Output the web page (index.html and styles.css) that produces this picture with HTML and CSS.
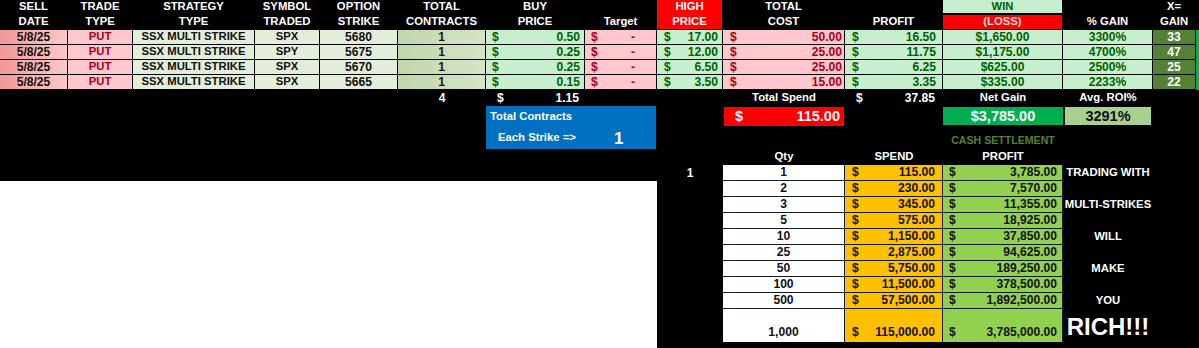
FILE: index.html
```html
<!DOCTYPE html>
<html>
<head>
<meta charset="utf-8">
<title>SSX Multi Strike</title>
<link rel="stylesheet" href="styles.css">
</head>
<body>
<div class="sheet">
  <div class="top">
    <div class="hc"><span>SELL</span><span>DATE</span></div>
    <div class="hc"><span>TRADE</span><span>TYPE</span></div>
    <div class="hc"><span>STRATEGY</span><span>TYPE</span></div>
    <div class="hc"><span>SYMBOL</span><span>TRADED</span></div>
    <div class="hc"><span>OPTION</span><span>STRIKE</span></div>
    <div class="hc"><span>TOTAL</span><span>CONTRACTS</span></div>
    <div class="hc"><span>BUY</span><span>PRICE</span></div>
    <div class="hc"><span></span><span>Target</span></div>
    <div class="hc hc-red"><span>HIGH</span><span>PRICE</span></div>
    <div class="hc"><span>TOTAL</span><span>COST</span></div>
    <div class="hc"><span></span><span>PROFIT</span></div>
    <div class="hc hc-winloss"><span class="win">WIN</span><span class="loss">(LOSS)</span></div>
    <div class="hc"><span></span><span>% GAIN</span></div>
    <div class="hc"><span>X=</span><span>GAIN</span></div>
    <div class="hc"></div>

    <div class="c c-date num">5/8/25</div>
    <div class="c c-put">PUT</div>
    <div class="c c-lt">SSX MULTI STRIKE</div>
    <div class="c c-lt">SPX</div>
    <div class="c c-lt num">5680</div>
    <div class="c c-qty num">1</div>
    <div class="c c-good money m-buy"><span>$</span><span>0.50</span></div>
    <div class="c c-bad money m-target"><span>$</span><span>-</span></div>
    <div class="c c-good money m-high"><span>$</span><span>17.00</span></div>
    <div class="c c-bad money m-cost"><span>$</span><span>50.00</span></div>
    <div class="c c-good money m-profit"><span>$</span><span>16.50</span></div>
    <div class="c c-good num">$1,650.00</div>
    <div class="c c-good num">3300%</div>
    <div class="c c-x num">33</div>
    <div class="c-edge"></div>

    <div class="c c-date num">5/8/25</div>
    <div class="c c-put">PUT</div>
    <div class="c c-lt">SSX MULTI STRIKE</div>
    <div class="c c-lt">SPY</div>
    <div class="c c-lt num">5675</div>
    <div class="c c-qty num">1</div>
    <div class="c c-good money m-buy"><span>$</span><span>0.25</span></div>
    <div class="c c-bad money m-target"><span>$</span><span>-</span></div>
    <div class="c c-good money m-high"><span>$</span><span>12.00</span></div>
    <div class="c c-bad money m-cost"><span>$</span><span>25.00</span></div>
    <div class="c c-good money m-profit"><span>$</span><span>11.75</span></div>
    <div class="c c-good num">$1,175.00</div>
    <div class="c c-good num">4700%</div>
    <div class="c c-x num">47</div>
    <div class="c-edge"></div>

    <div class="c c-date num">5/8/25</div>
    <div class="c c-put">PUT</div>
    <div class="c c-lt">SSX MULTI STRIKE</div>
    <div class="c c-lt">SPX</div>
    <div class="c c-lt num">5670</div>
    <div class="c c-qty num">1</div>
    <div class="c c-good money m-buy"><span>$</span><span>0.25</span></div>
    <div class="c c-bad money m-target"><span>$</span><span>-</span></div>
    <div class="c c-good money m-high"><span>$</span><span>6.50</span></div>
    <div class="c c-bad money m-cost"><span>$</span><span>25.00</span></div>
    <div class="c c-good money m-profit"><span>$</span><span>6.25</span></div>
    <div class="c c-good num">$625.00</div>
    <div class="c c-good num">2500%</div>
    <div class="c c-x num">25</div>
    <div class="c-edge"></div>

    <div class="c c-date num">5/8/25</div>
    <div class="c c-put">PUT</div>
    <div class="c c-lt">SSX MULTI STRIKE</div>
    <div class="c c-lt">SPX</div>
    <div class="c c-lt num">5665</div>
    <div class="c c-qty num">1</div>
    <div class="c c-good money m-buy"><span>$</span><span>0.15</span></div>
    <div class="c c-bad money m-target"><span>$</span><span>-</span></div>
    <div class="c c-good money m-high"><span>$</span><span>3.50</span></div>
    <div class="c c-bad money m-cost"><span>$</span><span>15.00</span></div>
    <div class="c c-good money m-profit"><span>$</span><span>3.35</span></div>
    <div class="c c-good num">$335.00</div>
    <div class="c c-good num">2233%</div>
    <div class="c c-x num">22</div>
    <div class="c-edge"></div>
  </div>

  <div class="bottom">
    <div class="tot tot-contracts num">4</div>
    <div class="tot tot-buy money"><span>$</span><span>1.15</span></div>
    <div class="tot tot-spend-label">Total Spend</div>
    <div class="tot tot-profit money"><span>$</span><span>37.85</span></div>
    <div class="tot tot-net-label">Net Gain</div>
    <div class="tot tot-roi-label">Avg. ROI%</div>

    <div class="blue-box">
      <div class="blue-l1">Total Contracts</div>
      <div class="blue-l2"><span>Each Strike =&gt;</span><span class="blue-num">1</span></div>
    </div>
    <div class="spend-box"><span>$</span><span>115.00</span></div>
    <div class="net-box">$3,785.00</div>
    <div class="roi-box">3291%</div>

    <div class="cash-title">CASH SETTLEMENT</div>
    <div class="ch ch-qty">Qty</div>
    <div class="ch ch-spend">SPEND</div>
    <div class="ch ch-profit">PROFIT</div>
    <div class="multiplier num">1</div>

    <div class="cash">
      <div class="q num">1</div><div class="s money"><span>$</span><span>115.00</span></div><div class="p money"><span>$</span><span>3,785.00</span></div><div class="lbl">TRADING WITH</div>
      <div class="q num">2</div><div class="s money"><span>$</span><span>230.00</span></div><div class="p money"><span>$</span><span>7,570.00</span></div><div class="lbl"></div>
      <div class="q num">3</div><div class="s money"><span>$</span><span>345.00</span></div><div class="p money"><span>$</span><span>11,355.00</span></div><div class="lbl">MULTI-STRIKES</div>
      <div class="q num">5</div><div class="s money"><span>$</span><span>575.00</span></div><div class="p money"><span>$</span><span>18,925.00</span></div><div class="lbl"></div>
      <div class="q num">10</div><div class="s money"><span>$</span><span>1,150.00</span></div><div class="p money"><span>$</span><span>37,850.00</span></div><div class="lbl">WILL</div>
      <div class="q num">25</div><div class="s money"><span>$</span><span>2,875.00</span></div><div class="p money"><span>$</span><span>94,625.00</span></div><div class="lbl"></div>
      <div class="q num">50</div><div class="s money"><span>$</span><span>5,750.00</span></div><div class="p money"><span>$</span><span>189,250.00</span></div><div class="lbl">MAKE</div>
      <div class="q num">100</div><div class="s money"><span>$</span><span>11,500.00</span></div><div class="p money"><span>$</span><span>378,500.00</span></div><div class="lbl"></div>
      <div class="q num">500</div><div class="s money"><span>$</span><span>57,500.00</span></div><div class="p money"><span>$</span><span>1,892,500.00</span></div><div class="lbl">YOU</div>
      <div class="q num last">1,000</div><div class="s money last"><span>$</span><span>115,000.00</span></div><div class="p money last"><span>$</span><span>3,785,000.00</span></div><div class="lbl last rich">RICH!!!</div>
    </div>

    <div class="blank-white"></div>
  </div>
</div>
</body>
</html>
```

FILE: styles.css
```css
* { box-sizing: border-box; }

html, body {
  margin: 0;
  padding: 0;
}

body {
  background: #000;
  color: #fff;
  font-family: "Liberation Sans", Arial, sans-serif;
  font-weight: bold;
  font-size: 11.3px;
  line-height: 1;
  width: 1199px;
  height: 348px;
  overflow: hidden;
}

.sheet {
  display: flex;
  flex-direction: column;
  width: 1199px;
  height: 348px;
}

.top,
.bottom {
  display: grid;
  grid-template-columns: 68px 65px 122px 65px 78px 88px 99px 72px 66px 122px 98px 120px 90px 43px 1fr;
}

.top {
  grid-template-rows: 30px repeat(4, 15px);
}

.bottom {
  flex: 1;
  grid-template-rows: 16px 21px 22px 16px repeat(9, 16px) 33px 1fr;
}

.num,
.money span {
  font-size: 12.1px;
}

/* header */
.hc {
  display: grid;
  grid-template-rows: 14px 15px;
  border-right: 1px solid #000;
  border-bottom: 1px solid #000;
}

.hc span {
  display: flex;
  align-items: center;
  justify-content: center;
  white-space: nowrap;
}

.hc-red { background: #ff0000; }

.hc-winloss {
  grid-template-rows: 13px 14px;
  row-gap: 2px;
}

.win { background: #c6efce; color: #006100; }
.loss { background: #ff0000; color: #ffd9d9; }

/* data cells */
.c {
  display: flex;
  align-items: center;
  justify-content: center;
  border-right: 1px solid #000;
  border-bottom: 1px solid #000;
  white-space: nowrap;
  color: #111;
}

.c-date { background: linear-gradient(90deg, #f29797, #fcc8c8); }
.c-put { background: #ffc7ce; color: #a8001a; }
.c-lt { background: #e3eeda; }
.c-qty { background: linear-gradient(90deg, #c0d6a9, #d5e5c6); color: #1a1a1a; }
.c-good { background: #c6efce; color: #006100; }
.c-bad { background: #ffc7ce; color: #a8001a; }
.c-x { background: #548235; color: #fff; }
.c-edge { background: #00b050; }

.money {
  display: flex;
  align-items: center;
  justify-content: space-between;
}

.m-buy { padding: 0 4px 0 6px; }
.m-target { padding: 0 21px 0 6px; }
.m-high { padding: 0 4px 0 7px; }
.m-cost { padding: 0 2px 0 7px; }
.m-profit { padding: 0 6px 0 7px; }

/* totals */
.tot {
  display: flex;
  align-items: center;
  justify-content: center;
  grid-row: 1;
  white-space: nowrap;
}

.tot-contracts { grid-column: 6; }
.tot-buy { grid-column: 7; justify-content: space-between; padding: 0 6px 0 11px; }
.tot-spend-label { grid-column: 10; }
.tot-profit { grid-column: 11; justify-content: space-between; padding: 0 8px 0 11px; }
.tot-net-label { grid-column: 12; }
.tot-roi-label { grid-column: 13; }

.blue-box {
  grid-column: 7 / 9;
  grid-row: 2 / 4;
  background: #0070c0;
  display: grid;
  grid-template-rows: 21px 22px;
  margin-right: 1px;
}

.blue-l1 {
  display: flex;
  align-items: center;
  padding-left: 4px;
}

.blue-l2 {
  display: flex;
  align-items: center;
  padding-left: 12px;
}

.blue-num {
  font-size: 17px;
  margin-left: 38px;
}

.spend-box {
  grid-column: 10;
  grid-row: 2;
  margin: 1px 1px 1px 1px;
  background: #ff0000;
  display: flex;
  align-items: center;
  justify-content: space-between;
  padding: 0 4px 0 11px;
  font-size: 14.5px;
}

.net-box {
  grid-column: 12;
  grid-row: 2;
  margin: 1px 0 2px 0;
  background: #00b050;
  display: flex;
  align-items: center;
  justify-content: center;
  font-size: 14.5px;
}

.roi-box {
  grid-column: 13;
  grid-row: 2;
  margin: 1px 2px 2px 2px;
  background: #a9d08e;
  color: #111;
  display: flex;
  align-items: center;
  justify-content: center;
  font-size: 14.5px;
}

.cash-title {
  grid-column: 12;
  grid-row: 3;
  display: flex;
  align-items: flex-end;
  justify-content: center;
  padding-bottom: 3px;
  color: #548235;
  font-size: 10.6px;
  white-space: nowrap;
}

.ch {
  grid-row: 4;
  display: flex;
  align-items: center;
  justify-content: center;
}

.ch-qty { grid-column: 10; }
.ch-spend { grid-column: 11; }
.ch-profit { grid-column: 12; }

.multiplier {
  grid-column: 9;
  grid-row: 5;
  display: flex;
  align-items: center;
  justify-content: center;
}

.cash {
  grid-column: 10 / 14;
  grid-row: 5 / 15;
  display: grid;
  grid-template-columns: 122px 98px 120px 90px;
  grid-template-rows: repeat(9, 16px) 33px;
  color: #111;
}

.cash .q,
.cash .s,
.cash .p {
  display: flex;
  align-items: center;
  border-bottom: 1px solid #141c30;
  border-right: 1px solid #141c30;
}

.cash .q {
  background: #fff;
  justify-content: center;
}

.cash .s {
  background: #ffc000;
  justify-content: space-between;
  padding: 0 7px 0 7px;
}

.cash .p {
  background: #92d050;
  justify-content: space-between;
  padding: 0 5px 0 6px;
}

.cash .lbl {
  display: flex;
  align-items: center;
  justify-content: center;
  color: #fff;
  white-space: nowrap;
}

.cash .last {
  align-items: flex-end;
  padding-bottom: 4px;
  border-bottom: none;
}

.cash .rich {
  font-size: 24px;
  padding-bottom: 3px;
}

.blank-white {
  grid-column: 1 / 9;
  grid-row: 6 / -1;
  background: #fff;
}
```
